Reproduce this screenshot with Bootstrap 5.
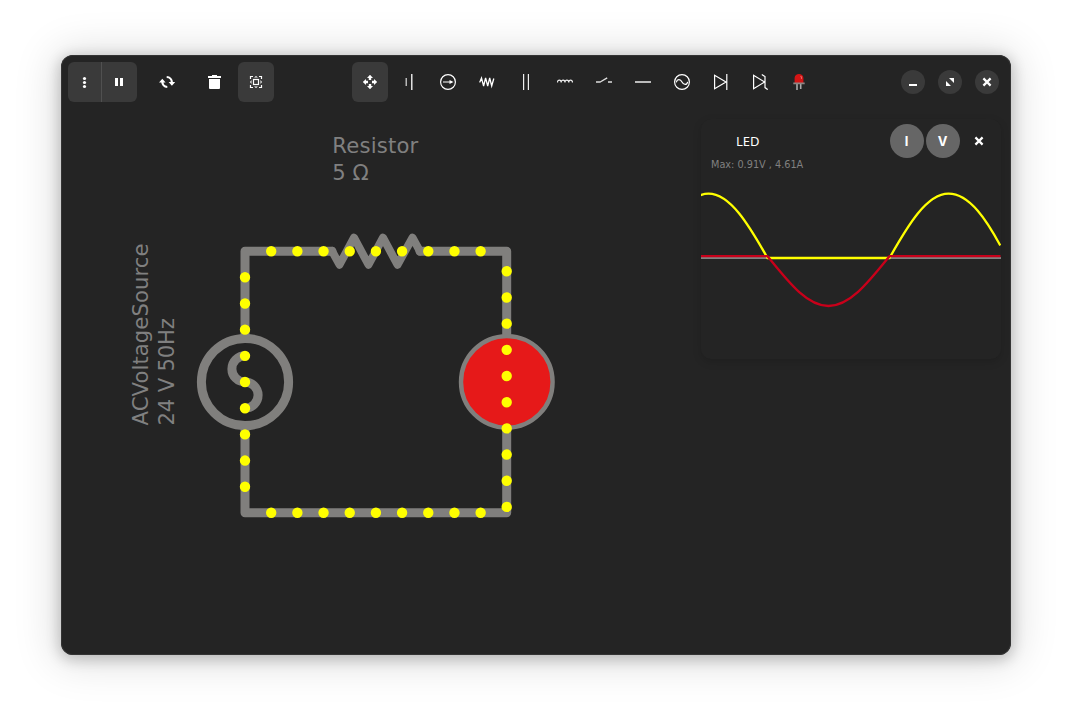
<!DOCTYPE html>
<html lang="en">
<head>
<meta charset="utf-8">
<meta name="viewport" content="width=device-width, initial-scale=1">
<title>Circuit Simulator</title>
<link href="https://cdn.jsdelivr.net/npm/bootstrap@5.3.0/dist/css/bootstrap.min.css" rel="stylesheet">
<style>
  body { background: #fff; font-family: "Noto Sans", sans-serif; height: 722px; padding: 55px 61px 67px; overflow: hidden; }
  .app-window { height: 600px; background: #242424; border-radius: 12px; overflow: hidden;
    box-shadow: inset 0 0 0 1px #343434; }
  .app-shadow { border-radius: 12px; box-shadow: 0 3px 14px 2px rgba(0,0,0,.20), 0 2px 42px 7px rgba(0,0,0,.13); }
  .headerbar { height: 54px; padding: 7px 12px 0 7px; }
  .tool { width: 36px; height: 40px; padding: 0; border: 0; border-radius: 6px; color: #fff;
    display: flex; align-items: center; justify-content: center; flex: none; }
  .tool.on, .tool.on:hover { background: #3a3a3a; color: #fff; }
  .tool svg { display: block; }
  .menu-group .tool:first-child { width: 34px; border-right: 1px solid #505050; }
  .menu-group .tool:last-child { width: 35px; }
  .tools { gap: 3px; margin-left: 78px; }
  .wm { width: 24px; height: 24px; padding: 0; border: 0; border-radius: 50%; background: #3a3a3a; color: #fff;
    display: flex; align-items: center; justify-content: center; }
  .wm-group { gap: 13px; height: 40px; }
  .circuit { left: 0; top: 0; }
  .circuit text { font: 21.2px "DejaVu Sans", sans-serif; fill: #808080; }
  .scope { width: 300px; height: 240px; top: 10px; right: 10px; background: #242424; border-radius: 10px; overflow: hidden; }
  .scope-shadow { box-shadow: 0 3px 8px 0 rgba(0,0,0,.15); }
  .scope-head { height: 39px; padding: 5px 5px 0 35px; color: #fff; font-size: 13px; }
  .scope-name { padding-top: 2px; }
  .trace-btn { width: 34px; height: 34px; padding: 0; border: 0; border-radius: 50%; background: #666; color: #fff; font: 700 13px Inter, "Liberation Sans", sans-serif; }
  .trace-btn, .trace-btn:hover { padding-right: 1px; }
  .close-btn { width: 34px; height: 34px; padding: 0; border: 0; color: #fff; display: flex; align-items: center; justify-content: center; }
  .plot text { font: 10.8px "DejaVu Sans Condensed", "DejaVu Sans", sans-serif; fill: #808080; }
</style>
</head>
<body>
<main class="app-shadow"><div class="app-window d-flex flex-column position-relative">
  <header class="headerbar d-flex align-items-start">
    <div class="menu-group d-flex">
      <button class="tool btn on rounded-end-0" aria-label="Menu"><svg width="16" height="16" fill="currentColor"><circle cx="7.5" cy="4.500" r="1.600"/><circle cx="7.500" cy="8.500" r="1.600"/><circle cx="7.500" cy="12.500" r="1.600"/></svg></button>
      <button class="tool btn on rounded-start-0" aria-label="Pause"><svg width="16" height="16" fill="currentColor"><path d="M3 4h3v8H3zM8 4h3v8H8z"/></svg></button>
    </div>
    <button class="tool btn" style="margin-left:12px" aria-label="Reset"><svg width="16" height="16" fill="none" stroke="currentColor" stroke-width="2.200"><path d="M3.300 7.500C3.300 10.500 5.300 12.900 8.300 13M7.700 3C10.700 3.100 12.900 5.500 12.900 8.500"/><path d="M0 8.600 3.300 4.800 6.600 8.600zM9.600 7.900H16.200L12.900 11.700z" fill="currentColor" stroke="none"/></svg></button>
    <button class="tool btn" style="margin-left:11px" aria-label="Delete"><svg width="16" height="16" fill="currentColor"><path d="M6 1h5v1h4v2H2V2h4zM3 5h11v9q0 1-1 1H4q-1 0-1-1z"/></svg></button>
    <button class="tool btn on" style="margin-left:6px" aria-label="Fit view"><svg width="16" height="16" fill="none" stroke="currentColor" stroke-width="1.200"><path d="M2.500 5V2.500H5M11 2.500h2.500V5M13.500 11v2.500H11M5 13.500H2.500V11"/><rect x="5.500" y="5.500" width="5" height="5"/><path fill="currentColor" stroke="none" d="M6 3.500 8 2l2 1.500zM6 12.500 8 14l2-1.500zM3.500 6 2 8l1.500 2zM12.500 6 14 8l-1.500 2z"/></svg></button>
    <div class="tools d-flex">
      <button class="tool btn on" aria-label="Move"><svg width="16" height="16" fill="currentColor"><path d="M8 .8 11 4H9.200v2H6.800V4H5zM8 15.200 5 12h1.800v-2h2.400v2H11zM.8 8 4 5v1.800h2v2.400H4V11zM15.200 8 12 11V9.200h-2V6.800h2V5z"/></svg></button>
      <button class="tool btn" aria-label="Voltage source"><svg width="16" height="16" stroke="#ddd"><path d="M5.200 4v8" stroke-width="1.200"/><path d="M10.800 0v16" stroke-width="1.300" stroke="#fff"/></svg></button>
      <button class="tool btn" aria-label="Current source"><svg width="16" height="16" fill="none" stroke="#fff" stroke-width="1.200"><circle cx="8" cy="8" r="7.400"/><path d="M3 8h9"/><path d="m9.500 6 4 2-4 2z" fill="#fff" stroke="none"/></svg></button>
      <button class="tool btn" aria-label="Resistor"><svg width="16" height="16" fill="none" stroke="#fff" stroke-width="1.300"><path d="M.3 7.800H1L2.500 4 4.600 12 6.600 4 8.700 12 10.700 4 12.700 12 14.800 4.500"/></svg></button>
      <button class="tool btn" aria-label="Capacitor"><svg width="16" height="16" stroke="#eee" stroke-width="1.200"><path d="M5.600 0v16M10.400 0v16"/></svg></button>
      <button class="tool btn" aria-label="Inductor"><svg width="16" height="16" fill="none" stroke="#eee" stroke-width="1.200"><path d="M.5 8.500C.5 5.300 4.200 5.300 4.200 8.500 4.200 5.300 8 5.300 8 8.500 8 5.300 11.800 5.300 11.800 8.500 11.800 5.300 15.500 5.300 15.500 8.500"/></svg></button>
      <button class="tool btn" aria-label="Switch"><svg width="16" height="16" stroke="#ddd" stroke-width="1.400"><path d="M0 8h4.500M12 8h4M4.200 8l7-4.200"/></svg></button>
      <button class="tool btn" aria-label="Wire"><svg width="16" height="16" stroke="#bbb" stroke-width="2"><path d="M0 8h16"/></svg></button>
      <button class="tool btn" aria-label="AC source"><svg width="16" height="16" fill="none" stroke="#fff" stroke-width="1.200"><circle cx="8" cy="8" r="7.400"/><path d="M2.300 8.300C3 5 6.400 4.800 8 8S13 11.300 13.700 7.800"/></svg></button>
      <button class="tool btn" aria-label="Diode"><svg width="16" height="16" fill="none" stroke="#fff" stroke-width="1.200"><path d="M1.600 1.300v13.400L13 8zM13.800 0v16"/></svg></button>
      <button class="tool btn" aria-label="Zener diode"><svg width="16" height="16" fill="none" stroke="#fff" stroke-width="1.200"><path d="M1.600 1.300v13.400L12.600 8zM9.800.6l3.200 2v11l2.700 2"/></svg></button>
      <button class="tool btn" aria-label="LED"><svg width="16" height="16"><path d="M5.200 9.500h1.600V16H5.200zM8.900 9.500h1.600V15H8.900z" fill="#aaa"/><path d="M3.600 9V4C3.600-1.300 12.400-1.300 12.400 4v5z" fill="#d41414"/><path d="M9.700 2q1 .8.800 2.800" fill="none" stroke="#f09090" stroke-width=".8"/><path d="M2.300 8.500h11.400v1.700H2.300z" fill="#8d8583"/></svg></button>
    </div>
    <div class="wm-group d-flex align-items-center ms-auto">
      <button class="wm btn" aria-label="Minimize"><svg width="16" height="16" fill="currentColor"><path d="M4 10h8v2H4z"/></svg></button>
      <button class="wm btn" aria-label="Maximize"><svg width="16" height="16" fill="currentColor"><path d="M7 4h5v5l-1.500-1.500L8.500 5.500zM4 7v5h5L7.500 10.500 5.500 8.500z"/></svg></button>
      <button class="wm btn" aria-label="Close"><svg width="16" height="16" stroke="currentColor" stroke-width="2.200"><path d="m4.400 4.400 7.200 7.200M11.600 4.400l-7.200 7.200"/></svg></button>
    </div>
  </header>

  <section class="flex-grow-1 position-relative">
    <svg class="circuit position-absolute" width="950" height="546" viewBox="61 109 950 546">
      <g fill="none" stroke="#807f7d" stroke-width="9" stroke-linecap="round" stroke-linejoin="round">
        <path d="M332 251.200H245V338M245 426v86.700h261.700V426M506.700 334v-82.800H420"/>
        <path d="m332 251 7.500 13.700 14.500-27 14.500 27 14.500-27 14.500 27 15-27 7.500 13.700" stroke-width="8"/>
        <circle cx="245" cy="382" r="43.600"/>
        <path d="M245 355.800a13 13 0 0 0 0 26.200a13 13 0 0 1 0 26.200"/>
      </g>
      <circle cx="506.800" cy="381.900" r="45.800" fill="#e61919" stroke="#807f7d" stroke-width="4.400"/>
      <g fill="none" stroke="#ff0" stroke-width="10.400" stroke-linecap="round" stroke-dasharray="0 26.180">
        <path d="M271.200 251.200H482"/>
        <path d="M245 277.300V488"/>
        <path d="M271.200 512.700H482"/>
        <path d="M506.700 271.300V508"/>
      </g>
      <text x="332.300" y="153.300" textLength="86">Resistor</text>
      <text x="332.300" y="179.600">5 Ω</text>
      <text transform="translate(147.700 425.500) rotate(-90)" textLength="182">ACVoltageSource</text>
      <text transform="translate(173.700 425.500) rotate(-90)" textLength="107.500">24 V 50Hz</text>
    </svg>

    <aside class="scope scope-shadow position-absolute">
      <div class="scope-head d-flex align-items-center">
        <span class="scope-name">LED</span>
        <div class="d-flex ms-auto" style="gap:2px">
          <button class="trace-btn btn">I</button>
          <button class="trace-btn btn">V</button>
          <button class="close-btn btn" aria-label="Close"><svg width="16" height="16" stroke="currentColor" stroke-width="2.200"><path d="m4.400 4.400 7.200 7.200M11.600 4.400l-7.200 7.200"/></svg></button>
        </div>
      </div>
      <svg class="plot d-block" width="300" height="200" viewBox="701 158 300 200">
        <text x="711" y="168">Max: 0.91V , 4.61A</text>
        <path d="M701 258h300" stroke="#808080" stroke-width="2"/>
        <g fill="none" stroke-width="2.300">
          <path stroke="#ff0" d="M648.500 258C668 225.200 686.800 193.700 708.500 193.700S749 225.200 767.500 258H889.500C908 225.200 926.800 193.700 948.500 193.700S987.500 222 1000.300 245.500"/>
          <path stroke="#c8001a" d="M701 256.200h66.500C788 281.500 806.700 306 828.500 306S869 281.500 889.500 256.200h111"/>
        </g>
      </svg>
    </aside>
  </section>
</div></main>
<script src="https://cdn.jsdelivr.net/npm/bootstrap@5.3.0/dist/js/bootstrap.bundle.min.js"></script>
</body>
</html>
